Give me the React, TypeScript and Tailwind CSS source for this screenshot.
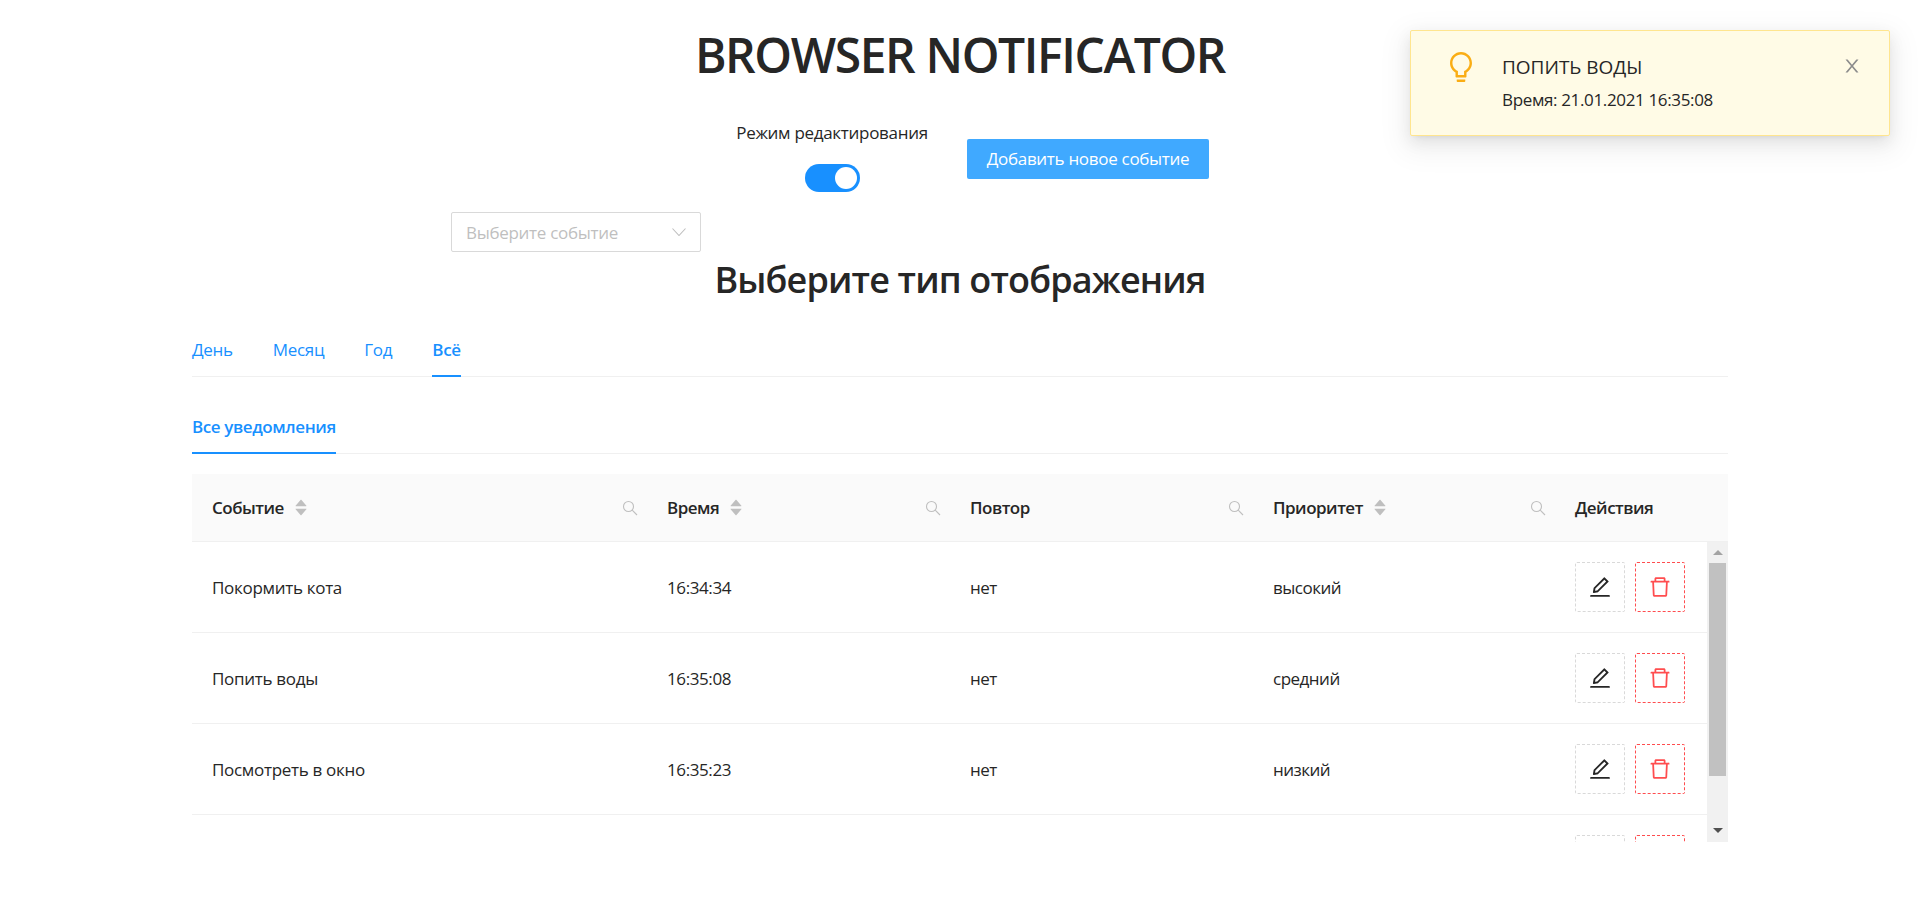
import React from "react";

const P = {
  bulb: "M632 888H392c-4.4 0-8 3.6-8 8v32c0 17.7 14.3 32 32 32h192c17.7 0 32-14.3 32-32v-32c0-4.4-3.6-8-8-8zM512 64c-181.1 0-328 146.9-328 328 0 121.4 66 227.4 164 284.1V792c0 17.7 14.3 32 32 32h264c17.7 0 32-14.3 32-32V676.1c98-56.7 164-162.7 164-284.1 0-181.1-146.9-328-328-328zm127.9 549.8L604 634.6V752H420V634.6l-35.9-20.8C305.4 568.3 256 484.5 256 392c0-141.4 114.6-256 256-256s256 114.6 256 256c0 92.5-49.4 176.3-128.1 221.8z",
  edit: "M257.7 752c2 0 4-.2 6-.5L431.9 722c2-.4 3.9-1.3 5.3-2.8l423.9-423.9a9.96 9.96 0 0 0 0-14.1L694.9 114.9c-1.9-1.9-4.4-2.9-7.1-2.9s-5.2 1-7.1 2.9L256.8 538.8c-1.5 1.5-2.4 3.3-2.8 5.3l-29.5 168.2a33.5 33.5 0 0 0 9.4 29.8c6.6 6.4 14.9 9.9 23.8 9.9zm67.4-174.4L687.8 215l73.3 73.3-362.7 362.6-88.9 15.7 15.6-89zM880 836H144c-17.7 0-32 14.3-32 32v36c0 4.4 3.6 8 8 8h784c4.4 0 8-3.6 8-8v-36c0-17.7-14.3-32-32-32z",
  del: "M360 184h-8c4.4 0 8-3.6 8-8v8h304v-8c0 4.4 3.6 8 8 8h-8v72h72v-80c0-35.3-28.7-64-64-64H352c-35.3 0-64 28.7-64 64v80h72v-72zm504 72H160c-17.7 0-32 14.3-32 32v32c0 4.4 3.6 8 8 8h60.4l24.7 523c1.6 34.1 29.8 61 63.9 61h454c34.2 0 62.3-26.8 63.9-61l24.7-523H888c4.4 0 8-3.6 8-8v-36c0-17.7-14.3-32-32-32zM731.3 840H292.7l-24.2-512h487l-24.2 512z",
  up: "M858.9 689L530.5 308.2c-9.4-10.9-27.5-10.9-37 0L165.1 689c-12.2 14.2-1.2 35 18.5 35h656.8c19.7 0 30.7-20.8 18.5-35z",
  down: "M840.4 300H183.6c-19.7 0-30.7 20.8-18.5 35l328.4 380.8c9.4 10.9 27.5 10.9 37 0L858.9 335c12.2-14.2 1.2-35-18.5-35z",
  close: "M563.8 512l262.5-312.9c4.4-5.2.7-13.1-6.1-13.1h-79.8c-4.7 0-9.2 2.1-12.3 5.7L511.6 449.8 295.1 191.7c-3-3.6-7.5-5.7-12.3-5.7H203c-6.8 0-10.5 7.9-6.1 13.1L459.4 512 196.9 824.9A7.95 7.95 0 0 0 203 838h79.8c4.7 0 9.2-2.1 12.3-5.7l216.5-258.1 216.5 258.1c3 3.6 7.5 5.7 12.3 5.7h79.8c6.8 0 10.5-7.9 6.1-13.1L563.8 512z",
};

function Icon({ d, className }: { d: string; className: string }) {
  return (
    <svg viewBox="64 64 896 896" fill="currentColor" className={className}>
      <path d={d} />
    </svg>
  );
}

function SearchThin() {
  return (
    <svg viewBox="0 0 16 16" fill="none" stroke="currentColor" strokeWidth="1.1" className="ml-auto w-[16px] h-[16px] text-[#bfbfbf]">
      <circle cx="6.5" cy="6.5" r="5" />
      <path d="M10.2 10.2L15 15" />
    </svg>
  );
}

function HeaderCell({ label, sort, search = true }: { label: string; sort?: boolean; search?: boolean }) {
  return (
    <div className="flex items-center pl-[20px] pr-[9px]">
      <span className="font-semibold tracking-[-0.5px]">{label}</span>
      {sort && (
        <span className="ml-[10px] flex flex-col text-[#bfbfbf]">
          <Icon d={P.up} className="w-[14px] h-[14px] -mb-[5px]" />
          <Icon d={P.down} className="w-[14px] h-[14px]" />
        </span>
      )}
      {search && <SearchThin />}
    </div>
  );
}

function Row({ name, time, rep, prio }: { name?: string; time?: string; rep?: string; prio?: string }) {
  return (
    <div className="grid grid-cols-[455px_303px_303px_302px_1fr] h-[91px] shrink-0 border-b border-[#f0f0f0] items-center">
      <div className="pl-[20px] pt-[2px]">{name}</div>
      <div className="pl-[20px] pt-[2px] tracking-[-0.4px]">{time}</div>
      <div className="pl-[20px] pt-[2px] tracking-[-0.5px]">{rep}</div>
      <div className="pl-[20px] pt-[2px] tracking-[-0.5px]">{prio}</div>
      <div className="pl-[20px] flex gap-[10px]">
        <button className="w-[50px] h-[50px] border border-dashed border-[#d9d9d9] rounded-[2px] flex items-center justify-center text-[#262626]">
          <Icon d={P.edit} className="w-[22px] h-[22px]" />
        </button>
        <button className="w-[50px] h-[50px] border border-dashed border-[#ff4d4f] rounded-[2px] flex items-center justify-center text-[#ff4d4f]">
          <Icon d={P.del} className="w-[22px] h-[22px]" />
        </button>
      </div>
    </div>
  );
}

export default function App() {
  return (
    <div className="relative w-[1920px] h-[903px] overflow-hidden bg-white text-[17px] leading-[24px] tracking-[-0.3px] text-[#262626] font-['Open_Sans','Noto_Sans',sans-serif]">
      <h1 className="pt-[26px] h-[84px] text-center text-[48px] leading-[58px] font-semibold tracking-[-1.4px]">BROWSER NOTIFICATOR</h1>

      <div className="flex mt-[37px] ml-[737px] h-[71px]">
        <div className="w-[190px] flex flex-col items-center">
          <span className="whitespace-nowrap">Режим редактирования</span>
          <span className="mt-[19px] w-[55px] h-[28px] rounded-full bg-[#1890ff] flex items-center justify-end pr-[3px]">
            <span className="w-[22px] h-[22px] rounded-full bg-white"></span>
          </span>
        </div>
        <button className="ml-[40px] mt-[18px] w-[242px] h-[40px] bg-[#40a9ff] text-white rounded-[2px]">Добавить новое событие</button>
      </div>

      <div className="mt-[20px] ml-[451px] w-[250px] h-[40px] border border-[#d9d9d9] rounded-[2px] flex items-center pl-[14px] pr-[14px] text-[#bfbfbf]">
        <span className="pt-[1px]">Выберите событие</span>
        <svg viewBox="0 0 14 8" fill="none" stroke="currentColor" strokeWidth="1.1" className="ml-auto w-[14px] h-[8px]">
          <path d="M0.5 0.5L7 7.5L13.5 0.5" />
        </svg>
      </div>

      <h2 className="mt-[4px] h-[48px] text-center text-[36px] leading-[48px] font-semibold tracking-[-0.85px]">Выберите тип отображения</h2>

      <div className="mx-[192px] w-[1536px]">
        <div className="flex gap-[40px] pt-[34px] border-b border-[#f0f0f0] text-[#1890ff]">
          <span className="pb-[14px]">День</span>
          <span className="pb-[14px]">Месяц</span>
          <span className="pb-[14px]">Год</span>
          <span className="pb-[12px] font-semibold border-b-2 border-[#1890ff] -mb-px">Всё</span>
        </div>

        <div className="flex pt-[38px] border-b border-[#f0f0f0] text-[#1890ff]">
          <span className="pb-[13px] font-semibold tracking-[-0.4px] border-b-2 border-[#1890ff] -mb-px">Все уведомления</span>
        </div>

        <div className="mt-[20px]">
          <div className="grid grid-cols-[455px_303px_303px_302px_1fr] h-[68px] bg-[#fafafa] border-b border-[#f0f0f0]">
            <HeaderCell label="Событие" sort />
            <HeaderCell label="Время" sort />
            <HeaderCell label="Повтор" />
            <HeaderCell label="Приоритет" sort />
            <HeaderCell label="Действия" search={false} />
          </div>
          <div className="flex h-[300px] overflow-hidden">
            <div className="flex-1 flex flex-col">
              <Row name="Покормить кота" time="16:34:34" rep="нет" prio="высокий" />
              <Row name="Попить воды" time="16:35:08" rep="нет" prio="средний" />
              <Row name="Посмотреть в окно" time="16:35:23" rep="нет" prio="низкий" />
              <Row />
            </div>
            <div className="w-[21px] bg-[#f1f1f1] flex flex-col items-center">
              <div className="h-[21px] flex items-center justify-center">
                <span className="w-0 h-0 border-x-[5px] border-x-transparent border-b-[5px] border-b-[#a3a3a3]"></span>
              </div>
              <div className="w-[17px] h-[213px] bg-[#c1c1c1]"></div>
              <div className="mt-auto h-[24px] flex items-center justify-center">
                <span className="w-0 h-0 border-x-[5px] border-x-transparent border-t-[5px] border-t-[#505050]"></span>
              </div>
            </div>
          </div>
        </div>
      </div>

      <div className="absolute top-[30px] right-[30px] w-[480px] h-[106px] bg-[#fffbe6] border border-[#ffe58f] rounded-[2px] shadow-[0_3px_6px_-4px_rgba(0,0,0,0.12),0_6px_16px_0_rgba(0,0,0,0.08),0_9px_28px_8px_rgba(0,0,0,0.05)]">
        <Icon d={P.bulb} className="absolute left-[35px] top-[21px] w-[30px] h-[30px] text-[#faad14]" />
        <div className="absolute left-[91px] top-[24px] text-[19px] leading-[24px] whitespace-nowrap tracking-normal">ПОПИТЬ ВОДЫ</div>
        <div className="absolute left-[91px] top-[57px] whitespace-nowrap tracking-[-0.35px]">Время: 21.01.2021 16:35:08</div>
        <Icon d={P.close} className="absolute right-[28px] top-[26px] w-[18px] h-[18px] text-[#8c8c8c]" />
      </div>
    </div>
  );
}
